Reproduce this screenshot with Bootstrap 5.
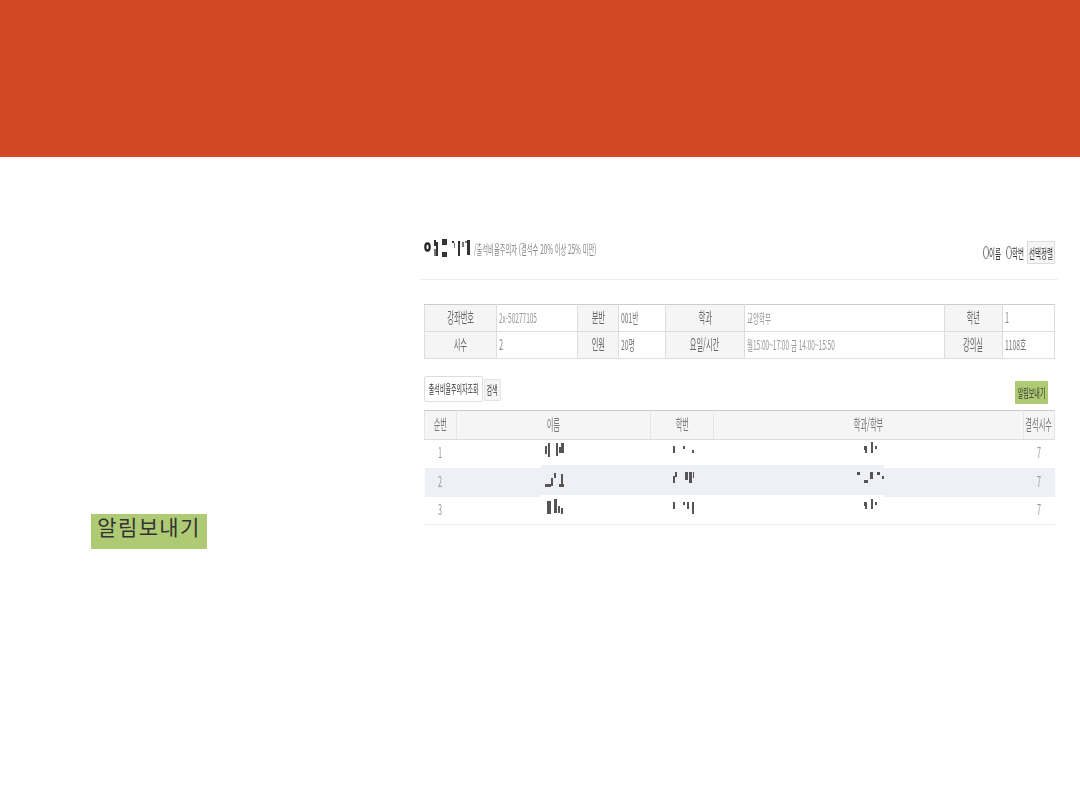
<!DOCTYPE html>
<html lang="ko">
<head>
<meta charset="utf-8">
<title>알림보내기</title>
<link href="https://cdn.jsdelivr.net/npm/bootstrap@5.3.0/dist/css/bootstrap.min.css" rel="stylesheet">
<style>
html,body{height:810px;overflow:hidden;background:#fff}
body{font-family:"Noto Sans CJK KR","Noto Sans",sans-serif;color:#777;font-size:14.5px}
.banner{height:157px;background:#d24726}
.stage{height:653px}
.side-pane{width:420px;flex:none;padding-left:91px;padding-top:357px}
.notice-btn{width:116px;height:35px;padding:0 0 10px;border:0;border-radius:0;background:#aecb74;color:#333;font-size:21px;line-height:25px;letter-spacing:1.4px;display:block;text-align:center}
.notice-btn:hover,.notice-btn:active{background:#aecb74;color:#333}
.main-pane{width:638px;flex:none}
.title-row{height:123px;padding:0 3px 15px 4px;border-bottom:1px solid #eee}
.title-left{margin-bottom:5px}
.title-mosaic{display:block;width:50px;height:20px;flex:none;filter:blur(.35px)}
.sub{width:122px;font-size:13px;color:#888;margin-bottom:1px}
.sub .sq-l>span{transform:scaleX(.485)}
.mini-radio{appearance:none;width:6px;height:13px;border:1px solid #777;border-radius:50%;margin:0;display:block;background:#fff;flex:none}
.radio-txt{width:12px;color:#333;font-size:13px;margin-right:5px;padding-bottom:2px}
.radio-txt.second{margin-right:3px}
.sort-btn{width:28px;height:23px;padding:0;border:1px solid #ddd;border-radius:0;background:#f5f5f5;color:#333;font-size:13px;display:flex;align-items:center;justify-content:center}
.body-wrap{padding:0 4px 0 4px;position:relative}
/* squeezed glyphs: the picture's text is compressed horizontally */
.sq{display:inline-flex;width:0;justify-content:center;white-space:nowrap;vertical-align:middle}
.sq>span{flex:none;transform:scaleX(.5);display:block}
.sq-l{display:inline-flex;width:0;justify-content:flex-start;white-space:nowrap;vertical-align:middle}
.sq-l>span{flex:none;transform:scaleX(.5);transform-origin:left center;display:block}
.info-tbl,.list-tbl{table-layout:fixed;width:630px;margin:0;border-collapse:collapse;color:#777;--bs-table-bg:transparent;--bs-table-color:#777}
.info-tbl{margin-top:24px}
.info-tbl td,.info-tbl th{height:27px;padding:0 0 3px;border:1px solid #ddd;vertical-align:middle;font-weight:400;line-height:1;text-align:center}
.info-tbl tr:first-child>*{border-top:1px solid #ccc}
.info-tbl th{background:#f5f5f5;color:#666}
.info-tbl td{text-align:left;padding-left:2px;color:#888}
.faint{font-size:13px;color:#999!important}
.dark{font-size:13.5px;color:#777!important}
.tool-row{margin-top:17px;height:28px;margin-bottom:6px}
.query-box{width:59px;height:26px;padding:0;border:1px solid #ddd;border-radius:2px;background:#fff;color:#333;font-size:12px;display:flex;align-items:center;justify-content:center}
.search-btn{width:17px;height:22px;padding:0;border:1px solid #e4e4e4;border-radius:1px;background:#f5f5f5;color:#333;font-size:12px;margin-left:1px;margin-top:3px;display:flex;align-items:center;justify-content:center}
.small-notice{width:33px;height:23px;padding:0;border:0;border-radius:0;background:#aecb74;color:#333;font-size:12px;margin-right:6px;margin-top:5px;display:flex;align-items:center;justify-content:center}
.list-tbl th{height:29px;padding:0 0 3px;background:#f5f5f5;border:1px solid #e5e5e5;border-top:1px solid #ccc;border-bottom:1px solid #ddd;font-weight:400;color:#777;text-align:center;vertical-align:middle;line-height:1}
.list-tbl td{padding:0;border:0;text-align:center;vertical-align:middle;line-height:1;color:#999;background:transparent;box-shadow:none}
.list-tbl td .num{display:block;padding-bottom:5px}
.list-tbl .r2 td{background:#eef0f5}
.list-tbl tbody tr:last-child td{border-bottom:1px solid #eee}
.mosaic{display:block;width:40px;margin:0 auto;position:relative;z-index:2;filter:blur(.35px)}
.mosaic rect{fill:#555}
.num{position:relative;z-index:2}
.row-patch{position:absolute;z-index:1;left:121px;top:161px;width:343px;height:32px;background:linear-gradient(#eef0f5 30px,#fff 30px)}
</style>
</head>
<body>
<header class="banner"></header>
<div class="stage d-flex">
  <div class="side-pane">
    <button type="button" class="btn notice-btn">알림보내기</button>
  </div>
  <div class="main-pane">
    <div class="title-row d-flex justify-content-between align-items-end">
      <div class="title-left d-flex align-items-end">
        <svg class="title-mosaic" viewBox="424 238 50 20" aria-hidden="true" fill="#333">
          <ellipse cx="427.5" cy="246" rx="2.2" ry="3.6" fill="none" stroke="#222" stroke-width="2.2"/>
          <rect x="434" y="239" width="2" height="6"/><rect x="436" y="241" width="2" height="14"/><rect x="434" y="248" width="2" height="7" fill="#777"/>
          <rect x="442" y="238" width="5" height="6"/><rect x="442" y="251" width="5" height="5"/>
          <rect x="452" y="240" width="2" height="2"/><rect x="454" y="242" width="1" height="5" fill="#777"/>
          <rect x="458" y="240" width="2" height="15"/><rect x="462" y="241" width="2" height="5" fill="#777"/>
          <rect x="467" y="239" width="3" height="15"/><rect x="465" y="240" width="2" height="2" fill="#777"/>
        </svg>
        <div class="sub"><span class="sq-l"><span>/출석비율주의자 (결석수 20% 이상 25% 미만)</span></span></div>
      </div>
      <div class="d-flex align-items-center">
        <input class="mini-radio" type="radio" name="sortKey" aria-label="이름">
        <span class="radio-txt"><span class="sq-l"><span>이름</span></span></span>
        <input class="mini-radio" type="radio" name="sortKey" aria-label="학번">
        <span class="radio-txt second"><span class="sq-l"><span>학번</span></span></span>
        <button type="button" class="btn sort-btn"><span class="sq"><span>선택정렬</span></span></button>
      </div>
    </div>
    <div class="body-wrap">
      <table class="table info-tbl">
        <colgroup><col style="width:72px"><col style="width:81px"><col style="width:41px"><col style="width:47px"><col style="width:79px"><col style="width:200px"><col style="width:58px"><col style="width:52px"></colgroup>
        <tr>
          <th><span class="sq"><span>강좌번호</span></span></th>
          <td class="faint"><span class="sq-l"><span>2x-50277105</span></span></td>
          <th><span class="sq"><span>분반</span></span></th>
          <td class="dark"><span class="sq-l"><span>001반</span></span></td>
          <th><span class="sq"><span>학과</span></span></th>
          <td class="faint"><span class="sq-l"><span>교양학부</span></span></td>
          <th><span class="sq"><span>학년</span></span></th>
          <td><span class="sq-l"><span>1</span></span></td>
        </tr>
        <tr>
          <th><span class="sq"><span>시수</span></span></th>
          <td><span class="sq-l"><span>2</span></span></td>
          <th><span class="sq"><span>인원</span></span></th>
          <td class="dark"><span class="sq-l"><span>20명</span></span></td>
          <th><span class="sq"><span>요일/시간</span></span></th>
          <td class="faint"><span class="sq-l"><span>월15:00~17:00 금 14:00~15:50</span></span></td>
          <th><span class="sq"><span>강의실</span></span></th>
          <td class="dark"><span class="sq-l"><span>1108호</span></span></td>
        </tr>
      </table>
      <div class="tool-row d-flex justify-content-between align-items-start">
        <div class="d-flex align-items-start">
          <button type="button" class="btn query-box"><span class="sq"><span>출석비율주의자조회</span></span></button>
          <button type="button" class="btn search-btn"><span class="sq"><span>검색</span></span></button>
        </div>
        <button type="button" class="btn small-notice"><span class="sq"><span>알림보내기</span></span></button>
      </div>
      <table class="table list-tbl">
        <colgroup><col style="width:32px"><col style="width:194px"><col style="width:63px"><col style="width:310px"><col style="width:31px"></colgroup>
        <thead><tr>
          <th><span class="sq"><span>순번</span></span></th>
          <th><span class="sq"><span>이름</span></span></th>
          <th><span class="sq"><span>학번</span></span></th>
          <th><span class="sq"><span>학과/학부</span></span></th>
          <th><span class="sq"><span>결석시수</span></span></th>
        </tr></thead>
        <tbody>
          <tr>
            <td><span class="num"><span class="sq"><span>1</span></span></span></td>
            <td><svg class="mosaic" height="28" viewBox="533 440 40 28" aria-hidden="true"><rect x="544" y="446" width="2" height="8"/><rect x="547" y="443" width="2" height="14"/><rect x="555" y="443" width="2" height="13"/><rect x="558" y="447" width="2" height="6"/><rect x="560" y="443" width="3" height="10"/></svg></td>
            <td><svg class="mosaic" height="28" viewBox="662 440 40 28" aria-hidden="true"><rect x="673" y="446" width="2" height="7"/><rect x="683" y="446" width="2" height="3"/><rect x="692" y="450" width="2" height="3"/></svg></td>
            <td><svg class="mosaic" height="28" viewBox="848 440 40 28" aria-hidden="true"><rect x="863" y="446" width="3" height="4"/><rect x="864" y="450" width="2" height="3"/><rect x="870" y="442" width="2" height="11"/><rect x="874" y="446" width="2" height="3"/></svg></td>
            <td><span class="num"><span class="sq"><span>7</span></span></span></td>
          </tr>
          <tr class="r2">
            <td><span class="num"><span class="sq"><span>2</span></span></span></td>
            <td><svg class="mosaic" height="29" viewBox="533 468 40 29" aria-hidden="true"><rect x="544" y="484" width="6" height="3"/><rect x="550" y="478" width="2" height="8"/><rect x="553" y="473" width="2" height="5"/><rect x="558" y="484" width="5" height="3"/><rect x="560" y="474" width="2" height="10"/></svg></td>
            <td><svg class="mosaic" height="29" viewBox="662 468 40 29" aria-hidden="true"><rect x="675" y="472" width="2" height="5"/><rect x="673" y="476" width="2" height="7"/><rect x="685" y="472" width="3" height="8"/><rect x="689" y="472" width="3" height="11"/><rect x="693" y="472" width="1" height="6"/></svg></td>
            <td><svg class="mosaic" height="29" viewBox="848 468 40 29" aria-hidden="true"><rect x="856" y="472" width="3" height="3"/><rect x="863" y="480" width="4" height="3"/><rect x="869" y="472" width="3" height="7"/><rect x="876" y="472" width="3" height="3"/><rect x="881" y="476" width="2" height="3"/></svg></td>
            <td><span class="num"><span class="sq"><span>7</span></span></span></td>
          </tr>
          <tr>
            <td><span class="num"><span class="sq"><span>3</span></span></span></td>
            <td><svg class="mosaic" height="27" viewBox="533 497 40 27" aria-hidden="true"><rect x="546" y="501" width="4" height="13"/><rect x="553" y="499" width="3" height="14"/><rect x="557" y="506" width="2" height="7"/><rect x="560" y="508" width="2" height="6"/></svg></td>
            <td><svg class="mosaic" height="27" viewBox="662 497 40 27" aria-hidden="true"><rect x="673" y="502" width="2" height="7"/><rect x="683" y="502" width="2" height="3"/><rect x="687" y="502" width="2" height="7"/><rect x="692" y="502" width="2" height="12"/></svg></td>
            <td><svg class="mosaic" height="27" viewBox="848 497 40 27" aria-hidden="true"><rect x="863" y="502" width="3" height="4"/><rect x="864" y="506" width="2" height="3"/><rect x="870" y="499" width="2" height="10"/><rect x="874" y="502" width="2" height="3"/></svg></td>
            <td><span class="num"><span class="sq"><span>7</span></span></span></td>
          </tr>
        </tbody>
      </table>
      <div class="row-patch"></div>
    </div>
  </div>
</div>
<script src="https://cdn.jsdelivr.net/npm/bootstrap@5.3.0/dist/js/bootstrap.bundle.min.js"></script>
</body>
</html>
